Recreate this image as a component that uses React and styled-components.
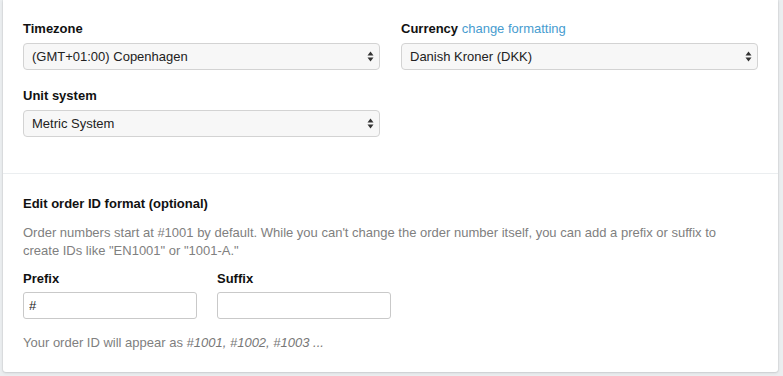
import React from "react";
import styled, { createGlobalStyle } from "styled-components";

const Global = createGlobalStyle`
  html, body { margin: 0; padding: 0; background: #ebeef0; }
  body { font-family: "Liberation Sans", Arial, Helvetica, sans-serif; font-size: 13px; color: #222; }
  * { box-sizing: border-box; }
`;

const Page = styled.div`
  padding: 0 5px 4px 3px;
`;

const Card = styled.div`
  background: #fff;
  border-radius: 0 0 3px 3px;
  box-shadow: 0 0 0 1px rgba(63, 63, 68, 0.05), 0 1px 3px 0 rgba(63, 63, 68, 0.15);
`;

const Section = styled.div`
  padding: ${(p) => p.$pad};
  & + & { border-top: 1px solid #ebeef0; }
`;

const Grid = styled.div`
  display: grid;
  grid-template-columns: 357px 357px;
  column-gap: 21px;
  row-gap: 17px;
`;

const Field = styled.div`
  display: flex;
  flex-direction: column;
`;

const Label = styled.label`
  font-weight: bold;
  line-height: 18px;
  margin-bottom: ${(p) => p.$mb || 5}px;
  color: #111;
`;

const Link = styled.a`
  font-weight: normal;
  color: #479ccf;
  text-decoration: none;
`;

const SelectWrap = styled.div`
  position: relative;
  height: 27px;
`;

const Select = styled.select`
  appearance: none;
  -webkit-appearance: none;
  width: 100%;
  height: 27px;
  border: 1px solid #d3d3d3;
  border-radius: 4px;
  background: #f7f7f7;
  font-family: inherit;
  font-size: 13px;
  color: #222;
  padding: 0 24px 0 8px;
  outline: none;
`;

const Arrows = styled.svg`
  position: absolute;
  right: 6px;
  top: 8px;
  pointer-events: none;
`;

const Heading = styled.div`
  font-weight: bold;
  line-height: 18px;
  color: #111;
`;

const Help = styled.p`
  margin: ${(p) => p.$m};
  max-width: 712px;
  color: #808080;
  line-height: 18px;
`;

const Em = styled.em`
  color: #777;
`;

const Row = styled.div`
  display: flex;
  gap: 20px;
  margin-top: 10px;
`;

const SmallField = styled.div`
  display: flex;
  flex-direction: column;
  width: 174px;
`;

const Input = styled.input`
  height: 27px;
  width: 100%;
  border: 1px solid #c9c9c9;
  border-radius: 3px;
  background: #fff;
  font-family: inherit;
  font-size: 13px;
  color: #222;
  padding: 0 5px;
  outline: none;
`;

const SelectBox = ({ value }) => (
  <SelectWrap>
    <Select defaultValue={value}>
      <option>{value}</option>
    </Select>
    <Arrows width="7" height="11" viewBox="0 0 7 11">
      <path d="M3.5 0.5 L6.5 4.5 L0.5 4.5 Z" fill="#333" />
      <path d="M3.5 10.5 L6.5 6.5 L0.5 6.5 Z" fill="#333" />
    </Arrows>
  </SelectWrap>
);

export default function App() {
  return (
    <>
      <Global />
      <Page>
        <Card>
          <Section $pad="20px 20px 36px">
            <Grid>
              <Field>
                <Label>Timezone</Label>
                <SelectBox value="(GMT+01:00) Copenhagen" />
              </Field>
              <Field>
                <Label>
                  Currency <Link href="#">change formatting</Link>
                </Label>
                <SelectBox value="Danish Kroner (DKK)" />
              </Field>
              <Field>
                <Label>Unit system</Label>
                <SelectBox value="Metric System" />
              </Field>
            </Grid>
          </Section>
          <Section $pad="21px 20px 20px">
            <Heading>Edit order ID format (optional)</Heading>
            <Help $m="11px 0 0">
              Order numbers start at #1001 by default. While you can't change the order number itself, you can add a prefix or suffix to create IDs like "EN1001" or "1001-A."
            </Help>
            <Row>
              <SmallField>
                <Label $mb={4}>Prefix</Label>
                <Input defaultValue="#" />
              </SmallField>
              <SmallField>
                <Label $mb={4}>Suffix</Label>
                <Input defaultValue="" />
              </SmallField>
            </Row>
            <Help $m="15px 0 0">
              Your order ID will appear as <Em>#1001, #1002, #1003 ...</Em>
            </Help>
          </Section>
        </Card>
      </Page>
    </>
  );
}
